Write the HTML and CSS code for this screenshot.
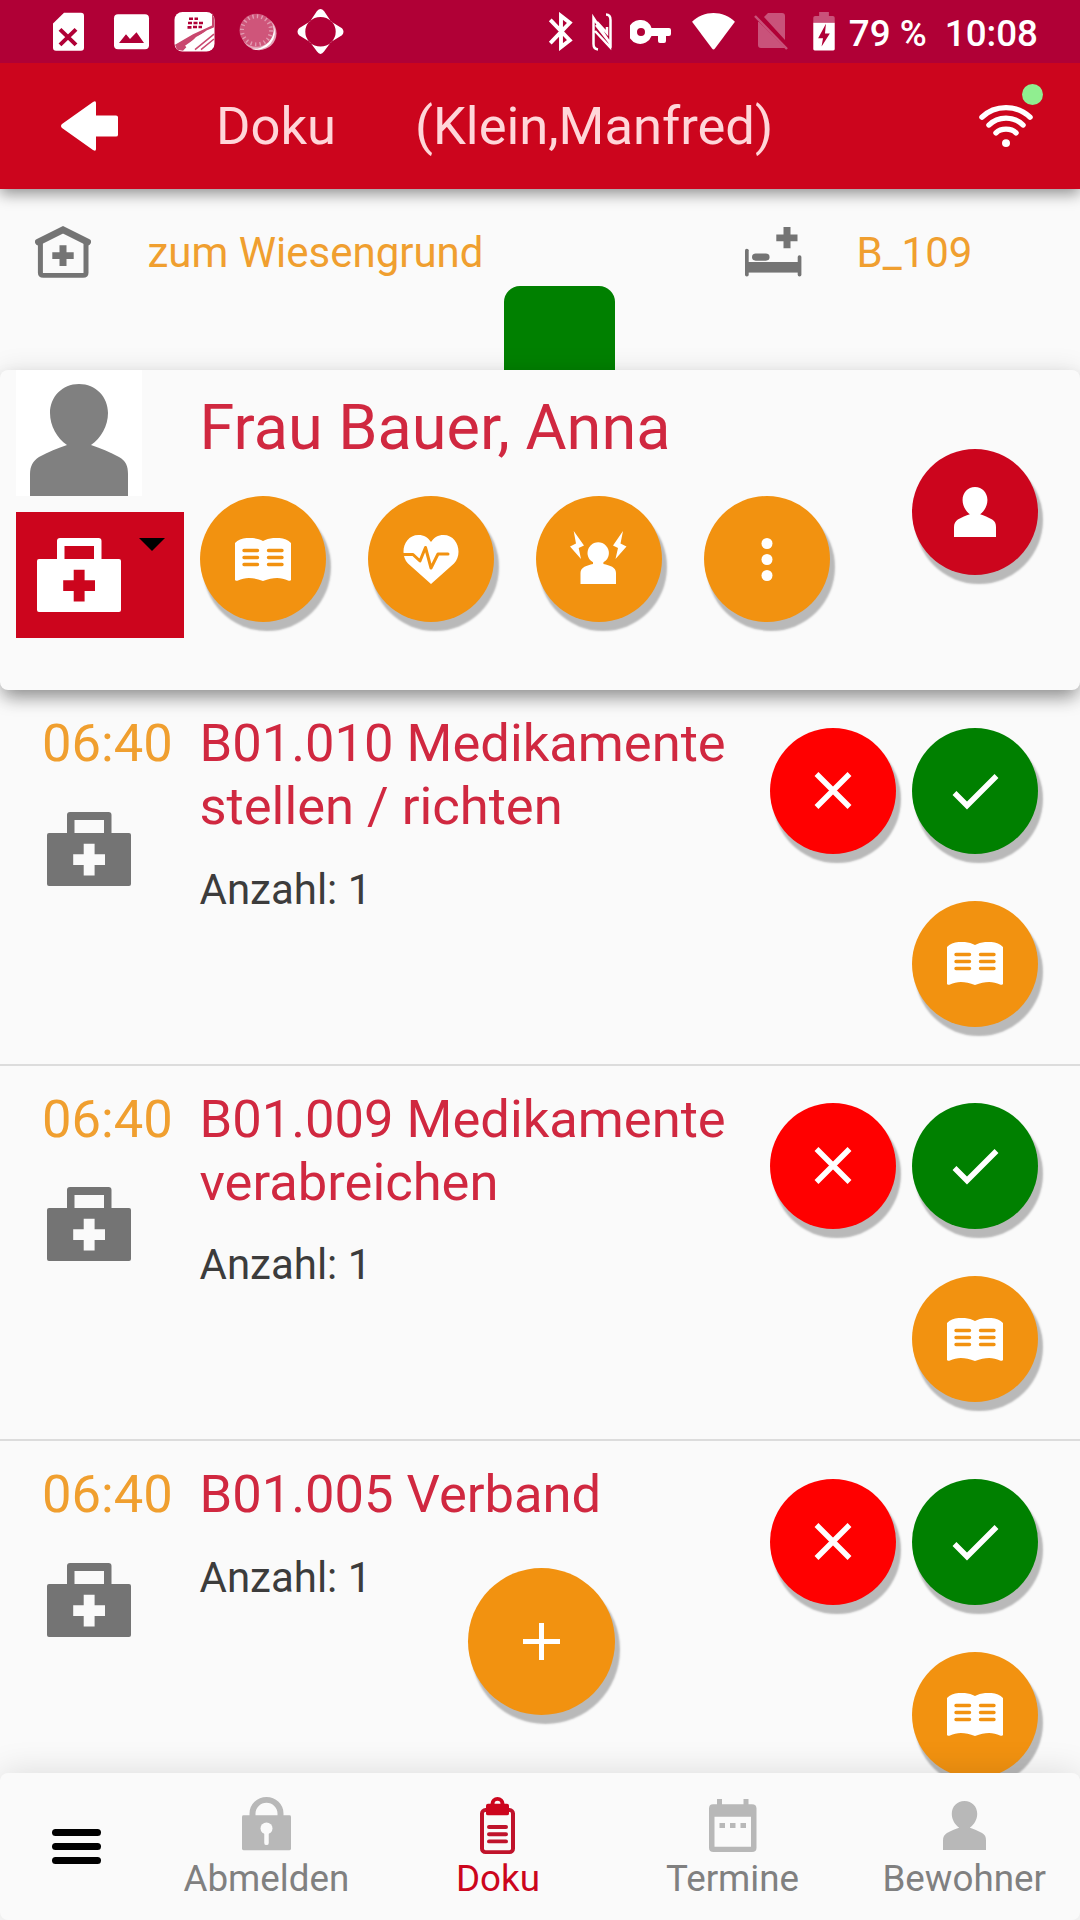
FILE: index.html
```html
<!DOCTYPE html>
<html lang="de">
<head>
  <meta charset="UTF-8">
  <meta name="viewport" content="width=device-width, initial-scale=1.0">
  <title>Doku</title>
  <link rel="stylesheet" href="styles.css">
</head>
<body>
  <!-- shared icons -->
  <svg class="sprite" width="0" height="0">
    <symbol id="person" viewBox="0 0 98 112" preserveAspectRatio="none">
      <path d="M49 0C66 0 78 13 78 29C78 42 71 54 61 61C70 64 80 68 89 73C96 77 98 82 98 90V112H0V90C0 82 3 77 9 73C18 68 28 64 37 61C27 54 20 42 20 29C20 13 32 0 49 0Z"/>
    </symbol>
    <symbol id="bag" viewBox="0 0 84 74">
      <path fill-rule="evenodd" d="M20 21V3a3 3 0 0 1 3-3H61.500a3 3 0 0 1 3 3V21H82a2 2 0 0 1 2 2V72a2 2 0 0 1-2 2H2a2 2 0 0 1-2-2V23a2 2 0 0 1 2-2ZM27.500 21H57V8H27.500ZM36.700 31.700V42.300H26.200V53H36.700V63.500H47.600V53H58V42.300H47.600V31.700Z"/>
    </symbol>
    <symbol id="book" viewBox="0 0 56 43">
      <path fill="#fff" d="M0 5C6 -1.500 20 -1.500 28 3C36 -1.500 50 -1.500 56 5V42C55 43 54 43 53 42.500C46 39 38 39 28 43C18 39 10 39 3 42.500C2 43 1 43 0 42Z"/>
      <path stroke="#f29210" stroke-width="3.400" stroke-linecap="round" d="M9 12.500H22.500M9 19.500H22.500M9 26.500H22.500M33.500 12.500H47M33.500 19.500H47M33.500 26.500H47"/>
    </symbol>
    <symbol id="close" viewBox="0 0 126 126">
      <path fill="none" stroke="#fff" stroke-width="5.500" d="M46.500 46L79.500 79M79.500 46L46.500 79"/>
    </symbol>
    <symbol id="check" viewBox="0 0 126 126">
      <path fill="none" stroke="#fff" stroke-width="5.500" d="M42.500 65L55 77.500L84.500 48"/>
    </symbol>
  </svg>

  <div class="page">
    <div class="status-bar">
      <div class="status-left">
        <svg viewBox="0 0 47 48" preserveAspectRatio="none"><path fill="#fff" fill-rule="evenodd" d="M19 5H36a3 3 0 0 1 3 3V41a3 3 0 0 1-3 3H11a3 3 0 0 1-3-3V16Z"/><path stroke="#b00036" stroke-width="4" d="M15 22L31 38M31 22L15 38"/></svg>
        <svg viewBox="0 0 47 48" preserveAspectRatio="none"><rect x="6" y="6.500" width="35" height="36" rx="4" fill="#fff"/><path fill="#b00036" d="M11 36L18 27L22 32L28.500 25L36 36Z"/></svg>
        <svg viewBox="0 0 47 48" preserveAspectRatio="none"><rect x="3.500" y="4" width="40" height="41" rx="8" fill="#fff"/><path fill="#c9486f" d="M4 38L22 27L41 18V5L43 10V20L25 30L12 44L6 43Z"/><path fill="#fff" d="M14 39L36 23L43 20V25L21 37L17 42Z"/><path stroke="#c9486f" stroke-width="1.500" d="M24 43L43 27M30 43L43 32"/><path stroke="#b00036" stroke-width="2.600" stroke-dasharray="4 1.500" d="M18 11H27M17 15.500H32M16.500 20H21M22 19.500H31"/></svg>
        <svg viewBox="0 0 47 48" preserveAspectRatio="none"><circle cx="25" cy="26" r="17.500" fill="#e4a3b7"/><path fill="#fff" d="M39 17A18 18 0 0 1 17 42A20 20 0 0 0 39 17Z"/><circle cx="22.500" cy="23" r="17" fill="#cf557a"/><circle cx="22.500" cy="23" r="14.500" fill="none" stroke="#e29ab1" stroke-width="4" stroke-dasharray="1.400 3.150"/></svg>
        <svg viewBox="0 0 47 48" preserveAspectRatio="none"><path fill="#fff" fill-rule="evenodd" d="M20 3Q23.500-1 27 3L34 14L45 21Q48 24.500 45 28L34 35L27 45Q23.500 50 20 45L13 35L2 28Q-1 24.500 2 21L13 14ZM23.500 9.300A15.200 15.200 0 1 0 23.500 39.700A15.200 15.200 0 1 0 23.500 9.300Z"/></svg>
      </div>
      <div class="status-right">
        <svg class="bluetooth" viewBox="0 0 25 40"><path fill="none" stroke="#fff" stroke-width="4" d="M2 8L22 29L13 36V4L22 11L2 32"/></svg>
        <svg class="nfc" viewBox="0 0 20 38"><path fill="none" stroke="#fff" stroke-width="2.500" d="M6 36.500Q1.500 36 1.500 31V5L18.500 31V7Q18.500 1.500 14 1.500M4 12L18 30V34L3 18M5 9L15 20V14"/></svg>
        <svg class="key" viewBox="0 0 41 24"><path fill="#fff" fill-rule="evenodd" d="M11 0A11 11 0 0 1 21.500 8H39Q41 8 41 10V14Q41 16 39 16H36V21Q36 23 34 23H30Q28 23 28 21V16H21.500A12 12 0 1 1 11 0ZM11 8A4 4 0 1 0 11 16A4 4 0 1 0 11 8Z"/></svg>
        <svg class="wlan" viewBox="0 0 45 38"><path fill="#fff" d="M.5 9C12-3 33-3 44.500 9L24 36.500Q22.500 38.500 21 36.500Z"/></svg>
        <svg class="no-sim" viewBox="0 0 34 38"><path fill="#c9527a" d="M14 0H28Q31 0 31 3V27L10 4ZM5 9L31 35H7Q4 35 4 32V9Z"/><path stroke="#c9527a" stroke-width="2.500" d="M1 3L33 36"/></svg>
        <svg class="battery" viewBox="0 0 22 40"><path fill="#c9527a" d="M6 0H16V4H20Q22 4 22 6V11H0V6Q0 4 2 4H6Z"/><path fill="#fff" d="M0 11H22V38Q22 39.500 20.500 39.500H1.500Q0 39.500 0 38Z"/><path fill="#b00036" d="M13 12L5 27H10L8.500 35.500L17 22H12Z"/></svg>
        <span class="percent">79 %</span>
        <span class="clock">10:08</span>
      </div>
    </div>

    <div class="header">
      <svg class="back" viewBox="0 0 57 52" preserveAspectRatio="none"><path fill="#fff" d="M1 24L32 1Q35-1 35 2V15H55Q57 15 57 17V35Q57 37 55 37H35V50Q35 53 32 51L1 28Q-1 26 1 24Z"/></svg>
      <h1 class="title"><span>Doku</span><span>(Klein,Manfred)</span></h1>
      <div class="connection">
        <svg viewBox="0 0 54 43" preserveAspectRatio="none"><path fill="none" stroke="#fff" stroke-width="5.500" stroke-linecap="round" d="M3 12.500C16-.5 38-.5 51 12.500M10 20.500C19 11 35 11 44 20.500M17 28.500C22 23.500 32 23.500 37 28.500"/><circle cx="27" cy="39" r="4" fill="#fff"/></svg>
        <i class="online"></i>
      </div>
    </div>

    <div class="facility">
      <div class="facility-row">
        <svg width="56" height="52" viewBox="0 0 56 54" preserveAspectRatio="none"><g fill="none" stroke="#747474"><path stroke-width="7" stroke-linecap="round" d="M3.500 16.500L28 4L52.500 16.500"/><path stroke-width="5" d="M5.400 16V48.500Q5.400 51.200 8.400 51.200H48Q51 51.200 51 48.500V16"/><path stroke-width="7" d="M17.300 30.800H38.700M28 20V41.500"/></g></svg>
        <span>zum Wiesengrund</span>
        <svg width="57" height="50" viewBox="0 0 57 52" preserveAspectRatio="none"><g fill="#747474"><rect y="22.500" width="3.700" height="29" rx="1.800"/><rect x="52.700" y="29.500" width="3.700" height="22" rx="1.800"/><rect x="2" y="36.400" width="53" height="11"/><rect x="7" y="27.500" width="17.600" height="7.500" rx="3.700"/><path d="M38.500 0H45.500V7.700H52.500V14.700H45.500V22H38.500V14.700H31.300V7.700H38.500Z"/></g></svg>
        <span>B_109</span>
      </div>
      <div class="marker"></div>
    </div>

    <div class="resident">
      <div class="resident-left">
        <div class="avatar"><svg width="98" height="112" fill="#808080"><use href="#person"/></svg></div>
        <div class="dropdown">
          <svg width="84" height="74" fill="#fff"><use href="#bag"/></svg>
          <i class="caret"></i>
        </div>
      </div>
      <div class="resident-main">
        <h2 class="name">Frau Bauer, Anna</h2>
        <div class="actions">
          <a class="btn orange"><svg width="56" height="43"><use href="#book"/></svg></a>
          <a class="btn orange"><svg width="56" height="49" viewBox="0 0 56 49"><path fill="#fff" d="M28 49L5 28.500C-4 19 1 0 15.500 0C21 0 25 2.500 28 7C31 2.500 35 0 40.500 0C55 0 60 19 51 28.500Z"/><path fill="none" stroke="#f29210" stroke-width="3" stroke-linejoin="round" stroke-linecap="round" d="M0 19.500H10L17 26L22.500 12.500L28 33L35 19H45"/></svg></a>
          <a class="btn orange"><svg class="stress" width="57" height="53" viewBox="0 0 57 53"><g fill="#fff"><circle cx="28.200" cy="22" r="10.700"/><path d="M23 30H33.400V33C40 34.500 46 36 46 42V53H10.500V42C10.500 36 17 34.500 23 33ZM3.700 0L14 14.500L8.700 17L11 28L0 15.500L6 12.500ZM53 0L43 14.500L48 17L45.500 28L56.500 15.500L50.500 12.500Z"/></g></svg></a>
          <a class="btn orange"><svg width="12" height="43" viewBox="0 0 12 43" fill="#fff"><circle cx="6" cy="5.500" r="5.500"/><circle cx="6" cy="21.500" r="5.500"/><circle cx="6" cy="37.500" r="5.500"/></svg></a>
        </div>
      </div>
      <a class="btn crimson"><svg width="42" height="50" fill="#fff"><use href="#person"/></svg></a>
    </div>

    <div class="list">
      <div class="item">
        <div class="item-left">
          <div class="time">06:40</div>
          <svg width="84" height="74" fill="#747474"><use href="#bag"/></svg>
        </div>
        <div class="item-text">
          <h3>B01.010 Medikamente stellen / richten</h3>
          <p>Anzahl: 1</p>
        </div>
        <div class="item-actions">
          <a class="btn red"><svg width="126" height="126"><use href="#close"/></svg></a>
          <a class="btn green"><svg width="126" height="126"><use href="#check"/></svg></a>
          <a class="btn orange note"><svg width="56" height="43"><use href="#book"/></svg></a>
        </div>
      </div>
      <div class="item">
        <div class="item-left">
          <div class="time">06:40</div>
          <svg width="84" height="74" fill="#747474"><use href="#bag"/></svg>
        </div>
        <div class="item-text">
          <h3>B01.009 Medikamente verabreichen</h3>
          <p>Anzahl: 1</p>
        </div>
        <div class="item-actions">
          <a class="btn red"><svg width="126" height="126"><use href="#close"/></svg></a>
          <a class="btn green"><svg width="126" height="126"><use href="#check"/></svg></a>
          <a class="btn orange note"><svg width="56" height="43"><use href="#book"/></svg></a>
        </div>
      </div>
      <div class="item">
        <div class="item-left">
          <div class="time">06:40</div>
          <svg width="84" height="74" fill="#747474"><use href="#bag"/></svg>
        </div>
        <div class="item-text">
          <h3>B01.005 Verband</h3>
          <p>Anzahl: 1</p>
        </div>
        <div class="item-actions">
          <a class="btn red"><svg width="126" height="126"><use href="#close"/></svg></a>
          <a class="btn green"><svg width="126" height="126"><use href="#check"/></svg></a>
          <a class="btn orange note"><svg width="56" height="43"><use href="#book"/></svg></a>
        </div>
      </div>
    </div>

    <a class="btn orange fab"><svg width="37" height="37" viewBox="0 0 37 37"><path stroke="#fff" stroke-width="5" d="M0 18.500H37M18.500 0V37"/></svg></a>

    <div class="nav">
      <a class="menu"><i></i><i></i><i></i></a>
      <a class="tab">
        <svg width="49" height="57" viewBox="0 0 49 59" preserveAspectRatio="none"><path fill="none" stroke="#b8b8b8" stroke-width="6" d="M10.500 20V17A14 14 0 0 1 38.500 17V20"/><rect y="19" width="49" height="36" rx="1.500" fill="#b8b8b8"/><circle cx="24.500" cy="32.500" r="6" fill="#fafafa"/><path stroke="#fafafa" stroke-width="4.500" stroke-linecap="round" d="M24.500 34V47.500"/></svg>
        <span>Abmelden</span>
      </a>
      <a class="tab active">
        <svg width="35" height="57" viewBox="0 0 35 59" preserveAspectRatio="none"><rect x="2" y="13.500" width="31" height="43.500" rx="3.500" fill="none" stroke="#c0132b" stroke-width="4"/><path fill="#cc051d" fill-rule="evenodd" d="M8 7H10.500A7 7 0 0 1 24.500 7H27Q29 7 29 9V17Q29 19 27 19H8Q6 19 6 17V9Q6 7 8 7ZM14.500 7H20.500A3 3 0 0 0 14.500 7Z"/><path stroke="#c0132b" stroke-width="4" stroke-linecap="round" d="M9 31H26M9 38.500H26M9 46H26"/></svg>
        <span>Doku</span>
      </a>
      <a class="tab dates">
        <svg width="48" height="57" viewBox="0 0 48 59" preserveAspectRatio="none"><path fill="#b8b8b8" fill-rule="evenodd" d="M4 7.500H8V2H13V7.500H34.500V2H39.500V7.500H43Q47.500 7.500 47.500 12V52.500Q47.500 57 43 57H4.500Q0 57 0 52.500V12Q0 7.500 4 7.500ZM5.500 20.500V51.500H42V20.500Z"/><path fill="#b8b8b8" d="M10.500 27H16V32H10.500ZM21 27H26.500V32H21ZM31.500 27H37V32H31.500Z"/></svg>
        <span>Termine</span>
      </a>
      <a class="tab">
        <svg class="tab-person" width="43" height="49" fill="#b8b8b8"><use href="#person"/></svg>
        <span>Bewohner</span>
      </a>
    </div>
  </div>
</body>
</html>
```

FILE: styles.css
```css
* {
  margin: 0;
  padding: 0;
  box-sizing: border-box;
}
body {
  font-family: Roboto, "Liberation Sans", sans-serif;
  background: #fafafa;
}
h1, h2, h3 {
  font-weight: 400;
}
svg {
  display: block;
  flex: none;
}
.sprite {
  position: absolute;
}
.page {
  position: relative;
  display: flex;
  flex-direction: column;
  width: 1080px;
  height: 1920px;
  overflow: hidden;
  background: #fafafa;
}

/* status bar */
.status-bar {
  position: relative;
  z-index: 4;
  display: flex;
  justify-content: space-between;
  flex: none;
  height: 63px;
  padding: 0 42px 0 45px;
  background: #b00036;
  color: #fff;
}
.status-left {
  display: flex;
  gap: 16px;
  padding-top: 8px;
}
.status-left svg {
  width: 47px;
  height: 46.5px;
}
.status-right {
  display: flex;
  align-items: center;
  font-size: 36.75px;
  font-weight: 500;
  line-height: 70px;
  white-space: nowrap;
}
.bluetooth {
  width: 25px;
  height: 39px;
}
.nfc {
  width: 20px;
  height: 38px;
  margin-left: 19px;
}
.key {
  width: 41px;
  height: 24px;
  margin-left: 18px;
}
.wlan {
  width: 45px;
  height: 37px;
  margin-left: 20px;
}
.no-sim {
  width: 34px;
  height: 38px;
  margin-left: 18px;
}
.battery {
  width: 22px;
  height: 39px;
  margin-left: 25px;
}
.percent {
  margin-left: 14px;
}
.clock {
  margin-left: 18px;
}
.percent,
.clock {
  padding-top: 4px;
}

/* header */
.header {
  position: relative;
  z-index: 3;
  display: flex;
  align-items: center;
  flex: none;
  height: 126px;
  padding: 0 47px 0 61px;
  background: #cc051d;
  box-shadow: 0 5px 14px rgba(0, 0, 0, .42);
}
.back {
  width: 57px;
  height: 50px;
}
.title {
  display: flex;
  flex: 1;
  gap: 79px;
  margin-left: 98px;
  font-size: 52.5px;
  color: #ffd6d9;
}
.connection {
  position: relative;
}
.connection svg {
  width: 54px;
  height: 42px;
}
.online {
  position: absolute;
  top: -21px;
  right: -10px;
  width: 21px;
  height: 21px;
  border-radius: 50%;
  background: #90ee90;
}

/* facility and room */
.facility {
  display: flex;
  flex-direction: column;
  justify-content: space-between;
  flex: none;
  height: 181px;
  padding-top: 36px;
}
.facility-row {
  display: grid;
  grid-template-columns: 112.5px 597px 112px 1fr;
  align-items: center;
  padding-left: 35px;
  font-size: 42px;
  line-height: 50px;
  color: #f09f2f;
}
.facility-row span {
  padding-top: 3px;
}
.marker {
  width: 111px;
  height: 84px;
  margin-left: 504px;
  border-radius: 16px 16px 0 0;
  background: #008000;
}

/* round buttons */
.btn {
  display: flex;
  align-items: center;
  justify-content: center;
  flex: none;
  width: 126px;
  height: 126px;
  border-radius: 50%;
  box-shadow: 4px 8px 2px 1px #b9b9b9;
}
.orange {
  background: #f29210;
}
.crimson {
  background: #cc051d;
}
.red {
  background: #ff0000;
}
.green {
  background: #008000;
}

/* resident card */
.resident {
  position: relative;
  z-index: 2;
  display: flex;
  flex: none;
  height: 320px;
  padding-right: 42px;
  padding-left: 16px;
  border-radius: 8px;
  background: #fafafa;
  box-shadow: 0 10px 18px -3px rgba(0, 0, 0, .4), 0 0 26px rgba(0, 0, 0, .1);
}
.resident-left {
  width: 183.5px;
}
.avatar {
  display: flex;
  align-items: flex-end;
  justify-content: center;
  width: 126px;
  height: 126px;
  background: #fff;
}
.dropdown {
  display: flex;
  width: 168px;
  height: 126px;
  margin-top: 16px;
  padding: 26px 0 0 21px;
  background: #cc051d;
}
.caret {
  width: 0;
  height: 0;
  margin-left: 18px;
  border: 13px solid transparent;
  border-top-color: #000;
  border-bottom: none;
}
.resident-main {
  flex: 1;
  padding-top: 20.5px;
}
.name {
  font-size: 63px;
  line-height: 74px;
  color: #d02840;
}
.actions {
  display: flex;
  gap: 42px;
  margin-top: 31.5px;
}
.stress {
  margin-bottom: 3px;
}
.crimson {
  margin-top: 79px;
}

/* task list */
.list {
  flex: 1;
  min-height: 0;
  overflow: hidden;
}
.item {
  display: flex;
  height: 375.5px;
  border-bottom: 2px solid #dcdcdc;
}
.item-left {
  width: 199.5px;
  padding: 22px 0 0 42px;
}
.item-left svg {
  margin: 36.5px 0 0 5px;
}
.time,
.item h3 {
  font-size: 52.5px;
  line-height: 63px;
}
.time {
  color: #f09f2f;
}
.item-text {
  flex: 1;
  padding-top: 22px;
}
.item h3 {
  color: #d02840;
}
.item p {
  margin-top: 26.5px;
  font-size: 42px;
  line-height: 50px;
  color: #3c3c3c;
}
.item-actions {
  display: grid;
  grid-template-columns: 126px 126px;
  align-content: start;
  gap: 47px 16px;
  width: 310px;
  padding-top: 37.5px;
}
.note {
  grid-column: 2;
}
.fab {
  position: absolute;
  top: 1568px;
  left: 468px;
  width: 147px;
  height: 147px;
}

/* bottom navigation */
.nav {
  position: relative;
  z-index: 2;
  display: flex;
  flex: none;
  height: 147px;
  border-radius: 8px;
  background: #fafafa;
  box-shadow: 0 0 34px rgba(0, 0, 0, .13);
}
.menu {
  display: flex;
  flex-direction: column;
  gap: 7px;
  width: 150.5px;
  padding: 56px 0 0 51.5px;
}
.menu i {
  width: 49.5px;
  height: 7px;
  border-radius: 4px;
  background: #000;
}
.tab {
  display: flex;
  flex: 1;
  flex-direction: column;
  align-items: center;
  padding-top: 24px;
  font-size: 36.75px;
  line-height: 43px;
  color: #808080;
}
.tab span {
  margin-top: 2.5px;
}
.tab .tab-person {
  margin: 4px 0;
}
.dates {
  padding-left: 3px;
}
.active {
  color: #cc051d;
}
```
